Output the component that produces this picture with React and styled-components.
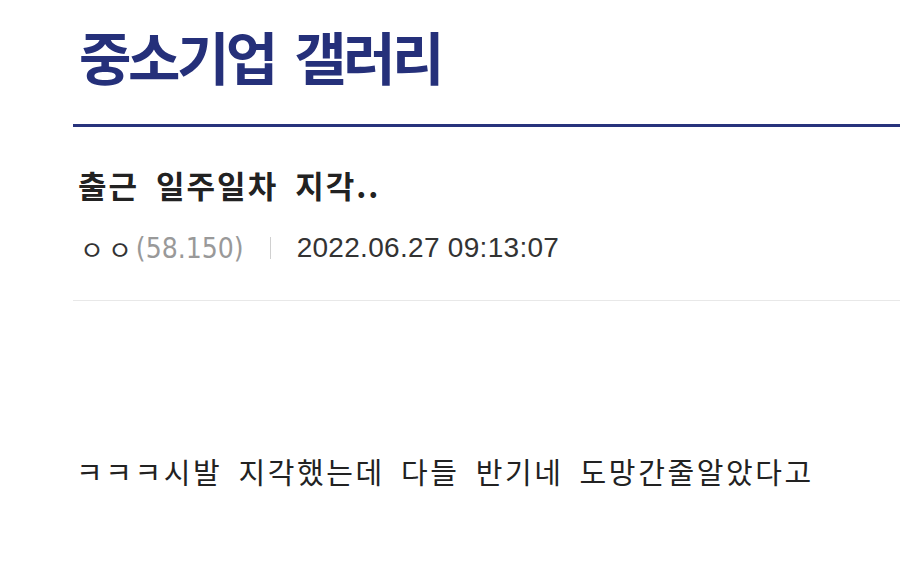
import React from 'react'
import styled, { createGlobalStyle } from 'styled-components';

const GlobalStyle = createGlobalStyle`
  html, body {
    margin: 0;
    padding: 0;
    background: #fff;
  }
  body {
    font-family: "Noto Sans CJK KR", "Noto Sans", sans-serif;
    color: #222;
  }
`;

const post = {
  gallery: '중소기업 갤러리',
  title: '출근 일주일차 지각..',
  nick: 'ㅇㅇ',
  ip: '(58.150)',
  date: '2022.06.27 09:13:07',
  body: 'ㅋㅋㅋ시발 지각했는데 다들 반기네 도망간줄알았다고',
};

const App = () => {
  return (
    <Page>
      <GlobalStyle />
      <Header>
        <GalleryTitle>{post.gallery}</GalleryTitle>
      </Header>
      <PostHead>
        <PostTitle>{post.title}</PostTitle>
        <Meta>
          <Nick>{post.nick}</Nick>
          <Ip>{post.ip}</Ip>
          <Divider />
          <Date>{post.date}</Date>
        </Meta>
      </PostHead>
      <Body>{post.body}</Body>
    </Page>
  );
};

export default App;

const Page = styled.div`
  width: 900px;
  height: 566px;
  overflow: hidden;
  padding-left: 73px;
  box-sizing: border-box;
`;

const Header = styled.div`
  height: 127px;
  box-sizing: border-box;
  border-bottom: 3px solid #27337c;
`;

const GalleryTitle = styled.h1`
  margin: 0;
  padding-left: 6px;
  font-size: 57px;
  font-weight: 700;
  line-height: 110px;
  letter-spacing: -3.5px;
  word-spacing: 10px;
  color: #25307a;
`;

const PostHead = styled.div`
  padding-top: 39px;
  padding-bottom: 37px;
  border-bottom: 1px solid #e8e8e8;
`;

const PostTitle = styled.h2`
  margin: 0;
  padding-left: 5px;
  font-size: 31px;
  font-weight: 700;
  line-height: 38px;
  letter-spacing: 2px;
  word-spacing: 8px;
  color: #222;
`;

const Meta = styled.div`
  display: flex;
  align-items: center;
  margin-top: 29px;
  padding-left: 7px;
  height: 30px;
`;

const Nick = styled.span`
  font-size: 26px;
  letter-spacing: 4px;
  color: #333;
`;

const Ip = styled.span`
  font-family: "DejaVu Sans Condensed", "DejaVu Sans", sans-serif;
  font-size: 28px;
  color: #999;
`;

const Divider = styled.span`
  width: 1px;
  height: 22px;
  background: #d0d0d0;
  margin: 0 26px;
`;

const Date = styled.span`
  font-family: "Liberation Sans", Arial, sans-serif;
  font-size: 28px;
  letter-spacing: 0.3px;
  color: #333;
`;

const Body = styled.p`
  margin: 150px 0 0;
  padding-left: 3px;
  font-size: 29px;
  line-height: 40px;
  letter-spacing: 2.6px;
  word-spacing: 7px;
  color: #222;
`;
